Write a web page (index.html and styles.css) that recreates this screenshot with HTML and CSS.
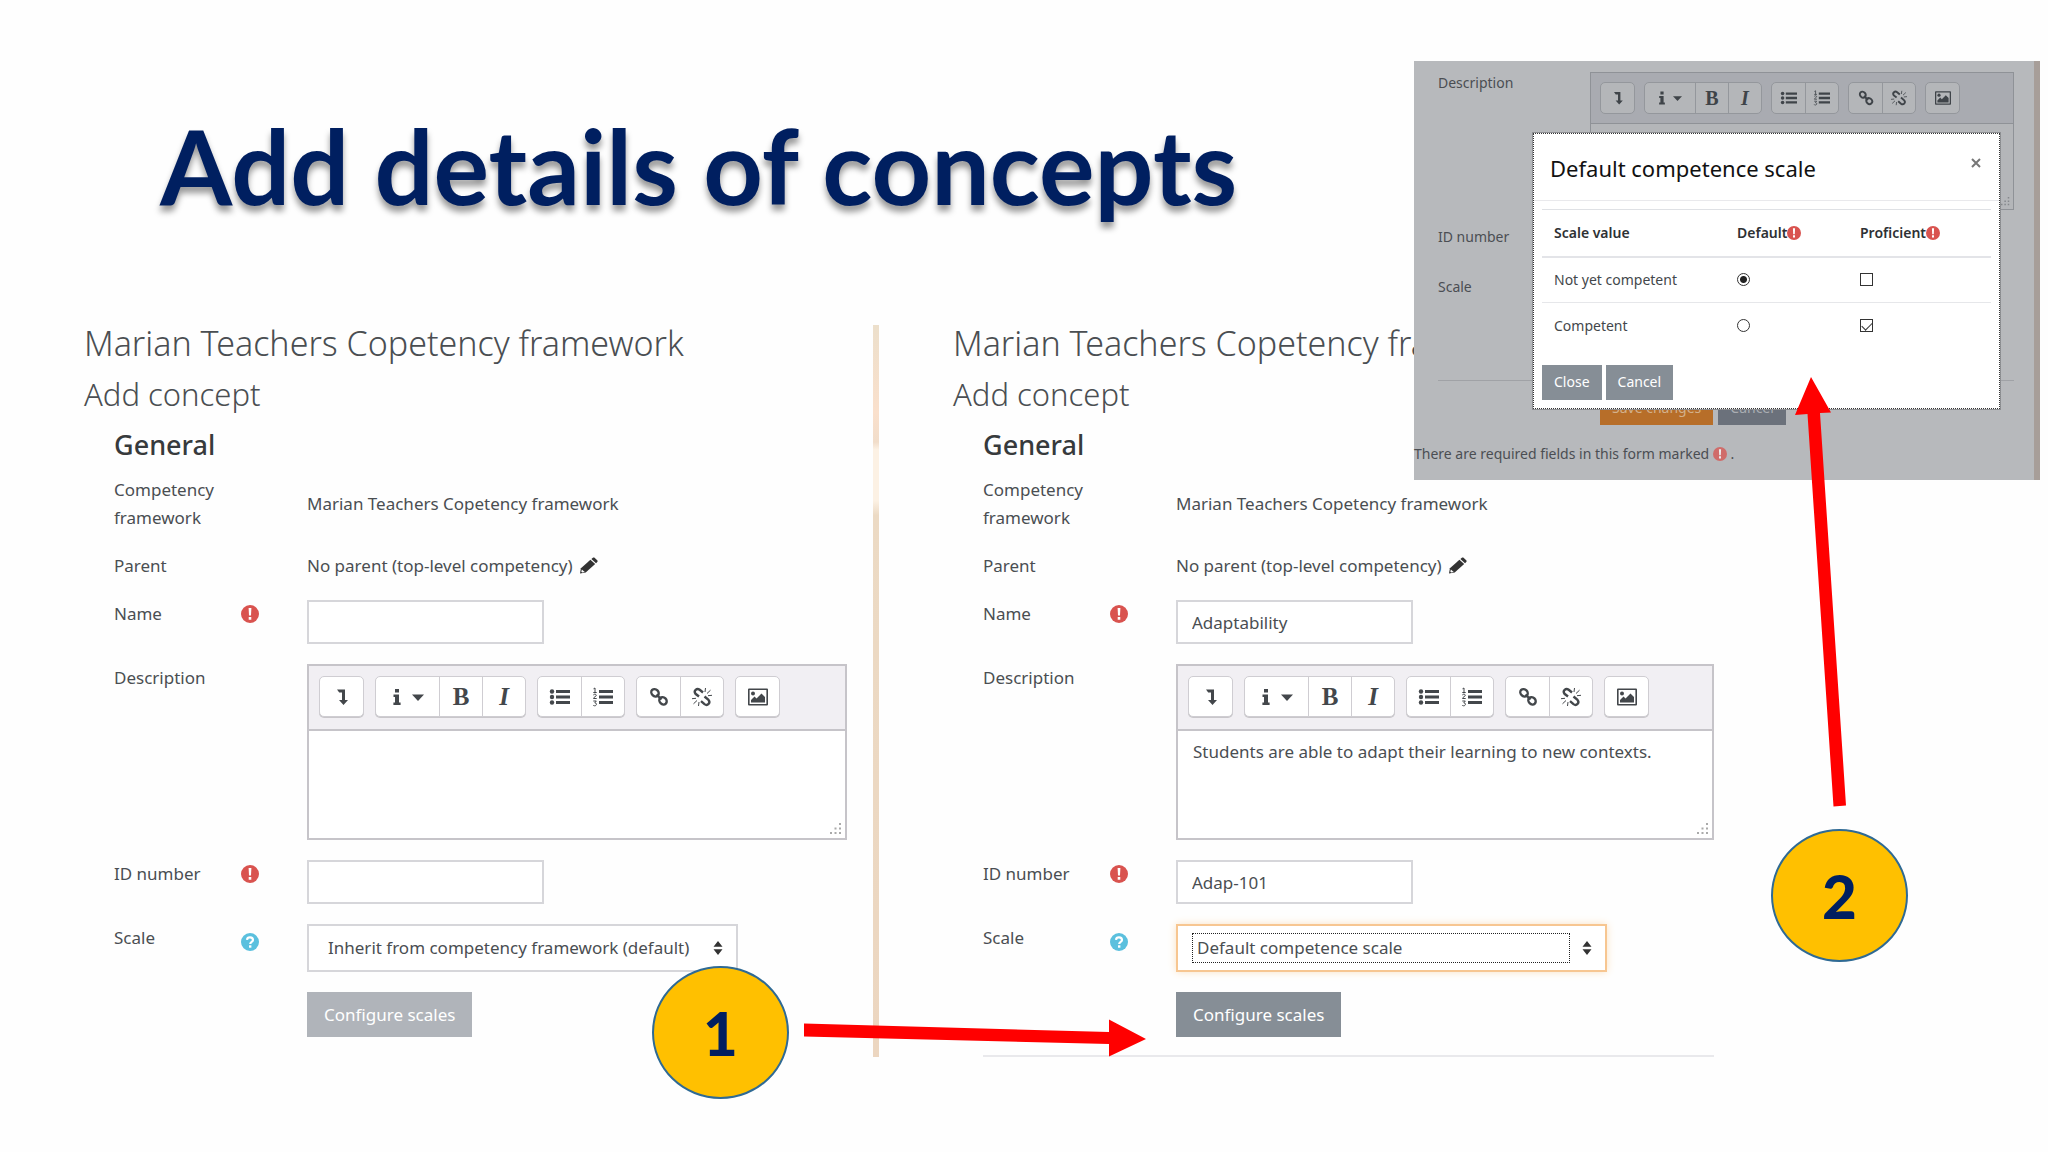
FILE: index.html
```html
<!DOCTYPE html>
<html lang="en">
<head>
<meta charset="utf-8">
<title>Add details of concepts</title>
<link rel="stylesheet" href="styles.css">
</head>
<body>
<svg class="sprite" aria-hidden="true">
  <symbol id="down" viewBox="0 0 22 20"><path d="M6 2.500h8v10.500h3l-4.500 5L8 13h3V5.500H8.200z"/></symbol>
  <symbol id="info" viewBox="0 0 10 20"><path d="M3 2h4v3.600H3zM1.500 7.500H7v8h1.600V18H1.400v-2.500H3V10H1.500z"/></symbol>
  <symbol id="caret" viewBox="0 0 12 20"><path d="M0 7.500h12l-6 6.500z"/></symbol>
  <symbol id="ul" viewBox="0 0 22 20"><circle cx="3" cy="4.500" r="2.200"/><circle cx="3" cy="10" r="2.200"/><circle cx="3" cy="15.500" r="2.200"/><path d="M7 3h14v3H7zM7 8.500h14v3H7zM7 14h14v3H7z"/></symbol>
  <symbol id="ol" viewBox="0 0 22 20"><path d="M7 3h14v3H7zM7 8.500h14v3H7zM7 14h14v3H7z"/><path class="thin" d="M1.500 1.800l1.500-.8v4.500M1.300 5.500h3.400M1.300 8c1-1.400 3-.9 3 .4 0 1-2.800 1.700-2.800 3.100h3.200M1.300 14h3l-1.500 1.800c2.200 0 2.200 3-.2 3-.8 0-1.300-.4-1.500-.8"/></symbol>
  <symbol id="link" viewBox="0 0 22 20"><g class="line"><ellipse cx="7" cy="5.800" rx="4" ry="3.400" transform="rotate(45 7 5.800)"/><ellipse cx="15" cy="13.800" rx="4" ry="3.400" transform="rotate(45 15 13.800)"/><path d="M8.500 7.500l5 5"/></g></symbol>
  <symbol id="unlink" viewBox="0 0 22 20"><path class="line" d="M8 9.500L4.500 6.800c-2.200-3 1.300-6.200 4.200-4l3.300 2.700M13.500 9.500l4 3.400c2.400 3-1 6.400-4 4.200L10 14.200"/><path class="thin" d="M14 5L14.500 1M16 6.500l3.500-3.300M17 8.700l4-.4M8 15L7.500 19M6 13.500l-3.500 3.300M5 11.300L1 11.700"/></symbol>
  <symbol id="image" viewBox="0 0 22 20"><path fill-rule="evenodd" d="M2 1.500h18a1 1 0 0 1 1 1v15a1 1 0 0 1-1 1H2a1 1 0 0 1-1-1v-15a1 1 0 0 1 1-1zM2.600 3v14h16.800V3z"/><circle cx="6" cy="6.500" r="2"/><path d="M4 15.500v-2.500l3.500-3.500 2 2 5-5L18 10v5.500z"/></symbol>
  <symbol id="required" viewBox="0 0 18 18"><circle cx="9" cy="9" r="9" fill="#d9534f"/><path fill="#fff" d="M7.600 3h2.800l-.4 7.500H8zM7.700 12h2.600v2.700H7.700z"/></symbol>
  <symbol id="help" viewBox="0 0 18 18"><circle cx="9" cy="9" r="9" fill="#5bc0de"/><path fill="none" stroke="#fff" stroke-width="2.200" d="M6 6.800c.3-3.400 6-3.200 6 .2 0 2-2.800 1.800-2.800 4"/><path fill="#fff" d="M8 12.300h2.400v2.400H8z"/></symbol>
  <symbol id="pencil" viewBox="0 0 19 17"><path d="M0 17l1-5.500L11 2.500l5 4.500L6 16z"/><path d="M12 1.600L13.600.3c.7-.5 1.200-.4 1.800.1l2.800 2.500c.6.6.6 1.200 0 1.800L16.900 6z"/><path fill="#fff" d="M2 12.700l3 2.600-2.600.6-1-.9z"/></symbol>
  <symbol id="sort" viewBox="0 0 10 14"><path d="M5 0l4.500 5.800h-9zM5 14l4.500-5.800h-9z"/></symbol>
  <symbol id="grip" viewBox="0 0 12 12"><path d="M9 0h2v2H9zM9 4.500h2v2H9zM9 9h2v2H9zM4.500 4.500h2v2h-2zM4.500 9h2v2h-2zM0 9h2v2H0z"/></symbol>
</svg>

<main class="slide">
  <h1 class="title">Add details of concepts</h1>

  <div class="panels">
    <section class="panel panel-empty">
      <h2 class="panel-title">Marian Teachers Copetency framework</h2>
      <h3 class="panel-subtitle">Add concept</h3>
      <form class="form">
        <h4 class="legend">General</h4>
        <div class="row row-center">
          <span class="label">Competency framework</span>
          <span class="value">Marian Teachers Copetency framework</span>
        </div>
        <div class="row">
          <span class="label">Parent</span>
          <span class="value">No parent (top-level competency) <a href="#parent" aria-label="Edit parent"><svg class="pencil"><use href="#pencil"/></svg></a></span>
        </div>
        <div class="row">
          <label class="label" for="name-a">Name</label>
          <svg class="mark"><use href="#required"/></svg>
          <input class="text" id="name-a" type="text">
        </div>
        <div class="row">
          <label class="label" for="desc-a">Description</label>
          <div class="editor">
            <div class="toolbar">
              <div class="group"><button type="button" aria-label="More"><svg><use href="#down"/></svg></button></div>
              <div class="group"><button type="button" class="wide" aria-label="Styles"><svg class="i"><use href="#info"/></svg><svg class="caret"><use href="#caret"/></svg></button><button type="button" class="bold">B</button><button type="button" class="italic">I</button></div>
              <div class="group"><button type="button" aria-label="Bulleted list"><svg><use href="#ul"/></svg></button><button type="button" aria-label="Numbered list"><svg><use href="#ol"/></svg></button></div>
              <div class="group"><button type="button" aria-label="Link"><svg><use href="#link"/></svg></button><button type="button" aria-label="Unlink"><svg><use href="#unlink"/></svg></button></div>
              <div class="group"><button type="button" aria-label="Image"><svg><use href="#image"/></svg></button></div>
            </div>
            <textarea id="desc-a"></textarea>
            <svg class="grip"><use href="#grip"/></svg>
          </div>
        </div>
        <div class="row">
          <label class="label" for="id-a">ID number</label>
          <svg class="mark"><use href="#required"/></svg>
          <input class="text" id="id-a" type="text">
        </div>
        <div class="row">
          <label class="label" for="scale-a">Scale</label>
          <svg class="mark mark-help"><use href="#help"/></svg>
          <div class="select"><select id="scale-a"><option>Inherit from competency framework (default)</option></select><svg class="sort"><use href="#sort"/></svg></div>
        </div>
        <div class="row row-last"><button type="button" class="button button-off" disabled>Configure scales</button></div>
      </form>
    </section>

    <div class="divider"></div>

    <section class="panel panel-filled">
      <h2 class="panel-title">Marian Teachers Copetency framework</h2>
      <h3 class="panel-subtitle">Add concept</h3>
      <form class="form">
        <h4 class="legend">General</h4>
        <div class="row row-center">
          <span class="label">Competency framework</span>
          <span class="value">Marian Teachers Copetency framework</span>
        </div>
        <div class="row">
          <span class="label">Parent</span>
          <span class="value">No parent (top-level competency) <a href="#parent" aria-label="Edit parent"><svg class="pencil"><use href="#pencil"/></svg></a></span>
        </div>
        <div class="row">
          <label class="label" for="name-b">Name</label>
          <svg class="mark"><use href="#required"/></svg>
          <input class="text" id="name-b" type="text" value="Adaptability">
        </div>
        <div class="row">
          <label class="label" for="desc-b">Description</label>
          <div class="editor">
            <div class="toolbar">
              <div class="group"><button type="button" aria-label="More"><svg><use href="#down"/></svg></button></div>
              <div class="group"><button type="button" class="wide" aria-label="Styles"><svg class="i"><use href="#info"/></svg><svg class="caret"><use href="#caret"/></svg></button><button type="button" class="bold">B</button><button type="button" class="italic">I</button></div>
              <div class="group"><button type="button" aria-label="Bulleted list"><svg><use href="#ul"/></svg></button><button type="button" aria-label="Numbered list"><svg><use href="#ol"/></svg></button></div>
              <div class="group"><button type="button" aria-label="Link"><svg><use href="#link"/></svg></button><button type="button" aria-label="Unlink"><svg><use href="#unlink"/></svg></button></div>
              <div class="group"><button type="button" aria-label="Image"><svg><use href="#image"/></svg></button></div>
            </div>
            <textarea id="desc-b">Students are able to adapt their learning to new contexts.</textarea>
            <svg class="grip"><use href="#grip"/></svg>
          </div>
        </div>
        <div class="row">
          <label class="label" for="id-b">ID number</label>
          <svg class="mark"><use href="#required"/></svg>
          <input class="text" id="id-b" type="text" value="Adap-101">
        </div>
        <div class="row">
          <label class="label" for="scale-b">Scale</label>
          <svg class="mark mark-help"><use href="#help"/></svg>
          <div class="select select-focus"><select id="scale-b"><option>Default competence scale</option></select><svg class="sort"><use href="#sort"/></svg></div>
        </div>
        <div class="row row-last"><button type="button" class="button">Configure scales</button></div>
        <hr class="rule">
      </form>
    </section>
  </div>

  <section class="window">
    <form class="backdrop">
      <div class="row">
        <label class="label" for="desc-c">Description</label>
        <div class="editor">
          <div class="toolbar">
            <div class="group"><button type="button" aria-label="More"><svg><use href="#down"/></svg></button></div>
            <div class="group"><button type="button" class="wide" aria-label="Styles"><svg class="i"><use href="#info"/></svg><svg class="caret"><use href="#caret"/></svg></button><button type="button" class="bold">B</button><button type="button" class="italic">I</button></div>
            <div class="group"><button type="button" aria-label="Bulleted list"><svg><use href="#ul"/></svg></button><button type="button" aria-label="Numbered list"><svg><use href="#ol"/></svg></button></div>
            <div class="group"><button type="button" aria-label="Link"><svg><use href="#link"/></svg></button><button type="button" aria-label="Unlink"><svg><use href="#unlink"/></svg></button></div>
            <div class="group"><button type="button" aria-label="Image"><svg><use href="#image"/></svg></button></div>
          </div>
          <textarea id="desc-c"></textarea>
          <svg class="grip"><use href="#grip"/></svg>
        </div>
      </div>
      <div class="row row-id"><span class="label">ID number</span></div>
      <div class="row row-scale"><span class="label">Scale</span></div>
      <hr class="rule">
      <div class="actions">
        <button type="button" class="button button-save">Save changes</button>
        <button type="button" class="button">Cancel</button>
      </div>
      <p class="note">There are required fields in this form marked <svg class="mark"><use href="#required"/></svg> .</p>
    </form>

    <div class="dialog" role="dialog" aria-labelledby="dialog-title">
      <header class="dialog-head">
        <h2 id="dialog-title">Default competence scale</h2>
        <button type="button" class="close" aria-label="Close dialog"><svg viewBox="0 0 10 10"><path d="M1 1l8 8M9 1l-8 8"/></svg></button>
      </header>
      <div class="dialog-body">
        <table>
          <thead>
            <tr><th class="col-value">Scale value</th><th class="col-default">Default<svg class="mark"><use href="#required"/></svg></th><th>Proficient<svg class="mark"><use href="#required"/></svg></th></tr>
          </thead>
          <tbody>
            <tr><td>Not yet competent</td><td><input type="radio" name="default" aria-label="Not yet competent is the default" checked></td><td><input type="checkbox" aria-label="Not yet competent is proficient"></td></tr>
            <tr><td>Competent</td><td><input type="radio" name="default" aria-label="Competent is the default"></td><td><input type="checkbox" aria-label="Competent is proficient" checked></td></tr>
          </tbody>
        </table>
        <div class="dialog-actions">
          <button type="button" class="button">Close</button>
          <button type="button" class="button">Cancel</button>
        </div>
      </div>
    </div>
  </section>

  <div class="step step-one">1</div>
  <svg class="arrow arrow-one" viewBox="0 0 342 38"><path d="M0 4.500L305 13V0.500L342 20 305 37.500V25L0 17.500z"/></svg>
  <div class="step step-two">2</div>
  <svg class="arrow arrow-two" viewBox="0 0 52 430"><path d="M16 0L36 35.500 25 36 51 428.500 38.500 429.500 12.500 37 0 38z"/></svg>
</main>
</body>
</html>
```
FILE: styles.css
```css
* {
  box-sizing: border-box;
}

:root {
  --navy: #001f60;
  --ink: #4a4e52;
  --icon: #43474b;
  --grey: #868e96;
  --field-line: #d6d6da;
  --editor-line: #c6c4c9;
  --bar: #f1eff3;
  --paper: #fff;
}

body {
  margin: 0;
  background: #fefefe;
  color: var(--ink);
  font: 17px/28px "Noto Sans", "Open Sans", sans-serif;
}

h1, h2, h3, h4, p, form {
  margin: 0;
}

button, input, select, textarea {
  font: inherit;
  color: inherit;
  margin: 0;
}

.sprite {
  display: none;
}

.line {
  fill: none;
  stroke: currentColor;
  stroke-width: 2.4;
}

.thin {
  fill: none;
  stroke: currentColor;
  stroke-width: 1;
}

.slide {
  position: relative;
  min-height: 100vh;
  padding-top: 105px;
  overflow: hidden;
}

.title {
  padding-left: 160px;
  color: var(--navy);
  font: 700 104px/120px Lato, sans-serif;
  text-shadow: 0 6px 6px rgba(0, 0, 0, 0.4);
}

/* two forms side by side */
.panels {
  display: grid;
  grid-template-columns: minmax(0, 789fr) 6px minmax(0, 835fr);
  padding: 100px 334px 90px 84px;
}

.panel-empty {
  padding-right: 26px;
}

.panel-filled {
  padding-left: 74px;
}

.divider {
  background: linear-gradient(#ecdfcb 0, #fae0cc 12%, #f1ddca 16%, #fcf1e4 17%, #fcf1e4 24%, #ecdac4 26%, #ecd6c0);
}

.panel-title {
  font-weight: 300;
  font-size: 34px;
  line-height: 36px;
  white-space: nowrap;
}

.panel-subtitle {
  margin-top: 15px;
  font-weight: 300;
  font-size: 31px;
  line-height: 36px;
}

.form {
  padding: 15px 0 0 30px;
}

.legend {
  margin-bottom: 13px;
  color: #373a3c;
  font-weight: 500;
  font-size: 27px;
  line-height: 36px;
}

.row {
  display: grid;
  grid-template-columns: 127px 66px minmax(0, 1fr);
  margin-bottom: 20px;
}

.row-center {
  align-items: center;
}

.row-last {
  margin-bottom: 18px;
}

.label {
  grid-column: 1;
}

.row > .value, .row > .editor, .row > .text, .row > .select, .row > .button {
  grid-column: 3;
  justify-self: start;
}

.mark {
  width: 18px;
  height: 18px;
}

.row > .mark {
  margin-top: 5px;
}

.row > .mark-help {
  margin-top: 9px;
}

.pencil {
  width: 18px;
  height: 17px;
  margin-left: 3px;
  vertical-align: -2px;
  fill: #333;
}

.text {
  width: 237px;
  height: 44px;
  padding: 0 14px;
  border: 2px solid var(--field-line);
  background: var(--paper);
}

.row > .editor {
  justify-self: stretch;
}

.editor {
  position: relative;
  height: 176px;
  display: flex;
  flex-direction: column;
  border: 2px solid var(--editor-line);
}

.toolbar {
  display: flex;
  gap: 11px;
  padding: 10px 10px 12px;
  border-bottom: 2px solid var(--editor-line);
  background: var(--bar);
}

.group {
  display: flex;
  border: 1px solid #cfcdd2;
  border-radius: 5px;
  background: var(--paper);
  box-shadow: 0 1px 0 #c8c6ca;
}

.group button {
  display: flex;
  align-items: center;
  justify-content: center;
  gap: 10px;
  width: 43px;
  height: 39px;
  padding: 0;
  border: 0;
  background: none;
  color: var(--icon);
}

.group button + button {
  border-left: 1px solid #cfcdd2;
}

.group .wide {
  width: 63px;
}

.group svg {
  width: 22px;
  height: 20px;
  fill: currentColor;
}

.group .i {
  width: 10px;
}

.group .caret {
  width: 12px;
}

.group .bold, .group .italic {
  font: 700 25px/24px "Liberation Serif", serif;
}

.group .italic {
  font-style: italic;
}

.editor textarea {
  flex: 1;
  width: 100%;
  padding: 7px 15px;
  border: 0;
  resize: none;
  background: var(--paper);
  line-height: 28px;
}

.grip {
  position: absolute;
  right: 3px;
  bottom: 3px;
  width: 12px;
  height: 12px;
  fill: #aaa;
}

.select {
  display: flex;
  align-items: center;
  gap: 12px;
  width: 431px;
  height: 48px;
  padding: 0 13px 0 14px;
  border: 2px solid var(--field-line);
  background: var(--paper);
}

.select select {
  flex: 1;
  min-width: 0;
  height: 30px;
  padding: 0 4px;
  border: 1px dotted transparent;
  background: none;
  appearance: none;
}

.select-focus {
  border-color: #f7c691;
  box-shadow: 0 0 8px #fbe3c4;
}

.select-focus select {
  border-color: #222;
}

.sort {
  width: 10px;
  height: 14px;
  fill: #333;
}

.button {
  height: 45px;
  padding: 0 17px;
  border: 0;
  background: var(--grey);
  color: #fff;
}

.button-off {
  background: #b0b4ba;
}

.rule {
  height: 2px;
  margin: 0;
  border: 0;
  background: #e9e9ec;
}

/* captured window with its dialog */
.window {
  --icon: #3f4449;
  --editor-line: #8f9297;
  --bar: #a9abb1;
  --paper: #b4b6b9;
  position: absolute;
  left: 1414px;
  top: 61px;
  width: 626px;
  padding: 11px 20px 15px 0;
  border-right: 6px solid #a79e99;
  background: #b7b9bc;
  color: #4b4e53;
  font-size: 14px;
  line-height: 22px;
}

.window .backdrop > .row {
  grid-template-columns: 152px minmax(0, 1fr);
  margin: 0 0 16px 24px;
}

.window .row > .editor {
  grid-column: 2;
}

.window .editor {
  height: 138px;
  border-width: 1px;
}

.window .toolbar {
  gap: 9px;
  padding: 9px;
  border-bottom-width: 1px;
}

.window .group, .window .group button + button {
  border-color: #94979c;
}

.window .group {
  box-shadow: none;
}

.window .group button {
  gap: 7px;
  width: 33px;
  height: 30px;
}

.window .group .wide {
  width: 50px;
}

.window .group svg {
  width: 18px;
  height: 16px;
}

.window .group .i {
  width: 8px;
}

.window .group .caret {
  width: 9px;
}

.window .group .bold, .window .group .italic {
  font-size: 20px;
}

.window .grip {
  width: 9px;
  height: 9px;
  fill: #85888c;
}

.row-id {
  min-height: 34px;
}

.row-scale {
  min-height: 88px;
}

.backdrop .rule {
  height: 1px;
  margin-left: 24px;
  background: #a0a2a6;
}

.window .button {
  height: 35px;
  padding: 0 12px;
}

.actions {
  display: flex;
  gap: 5px;
  margin: 9px 0 18px 186px;
}

.backdrop .button {
  background: #6b717b;
  color: #a9adb2;
}

.backdrop .button-save {
  background: #b76e29;
  color: #d3b18c;
}

.window .mark {
  width: 14px;
  height: 14px;
  vertical-align: -2px;
}

.note .mark {
  opacity: 0.75;
}

.dialog {
  position: absolute;
  left: 119px;
  top: 72px;
  width: 467px;
  border: 1px dotted #333;
  outline: 1px solid #8d8f92;
  background: #fff;
  color: #43474b;
}

.dialog-head {
  display: flex;
  justify-content: space-between;
  align-items: flex-start;
  padding: 19px 18px 17px 16px;
  border-bottom: 1px solid #e9e9ec;
}

.dialog-head h2 {
  color: #111;
  font-weight: 400;
  font-size: 22px;
  line-height: 30px;
}

.close {
  padding: 0;
  border: 0;
  background: none;
}

.close svg {
  display: block;
  width: 10px;
  height: 10px;
  margin-top: 5px;
  fill: none;
  stroke: #777;
  stroke-width: 2;
}

.dialog-body {
  padding: 8px;
}

.dialog table {
  width: 100%;
  border-collapse: collapse;
  border-top: 1px solid #dfe1e5;
}

.dialog th, .dialog td {
  height: 46px;
  padding: 0 12px;
  text-align: left;
}

.dialog th {
  height: 47px;
  border-bottom: 2px solid #e3e4e8;
  color: #2e3134;
  font-weight: 600;
}

.dialog td {
  border-bottom: 1px solid #e6e7ea;
}

.dialog tr:last-child td {
  border-bottom: 0;
}

.col-value {
  width: 183px;
}

.col-default {
  width: 123px;
}

.dialog input {
  appearance: none;
  display: block;
  width: 13px;
  height: 13px;
  border: 1px solid #333;
  background: #fff;
}

.dialog input[type="radio"] {
  border-radius: 50%;
}

.dialog input[type="radio"]:checked {
  background: radial-gradient(#222 0 3px, #fff 4px);
}

.dialog input[type="checkbox"]:checked::before {
  content: "";
  display: block;
  width: 9px;
  height: 5px;
  margin: 2px 1px;
  border: solid #333;
  border-width: 0 0 1px 1px;
  transform: rotate(-45deg);
}

.dialog-actions {
  display: flex;
  gap: 4px;
  margin-top: 16px;
}

/* numbered callouts and their arrows */
.step {
  position: absolute;
  display: flex;
  align-items: center;
  justify-content: center;
  width: 137px;
  height: 133px;
  border: 2px solid #2f6a94;
  border-radius: 50%;
  background: #ffc000;
  color: var(--navy);
  font: 900 60px/72px Lato, sans-serif;
}

.step-one {
  left: 652px;
  top: 966px;
}

.step-two {
  left: 1771px;
  top: 829px;
}

.arrow {
  position: absolute;
  fill: #f00;
}

.arrow-one {
  left: 804px;
  top: 1019px;
  width: 342px;
  height: 38px;
}

.arrow-two {
  left: 1795px;
  top: 377px;
  width: 52px;
  height: 430px;
}
```
